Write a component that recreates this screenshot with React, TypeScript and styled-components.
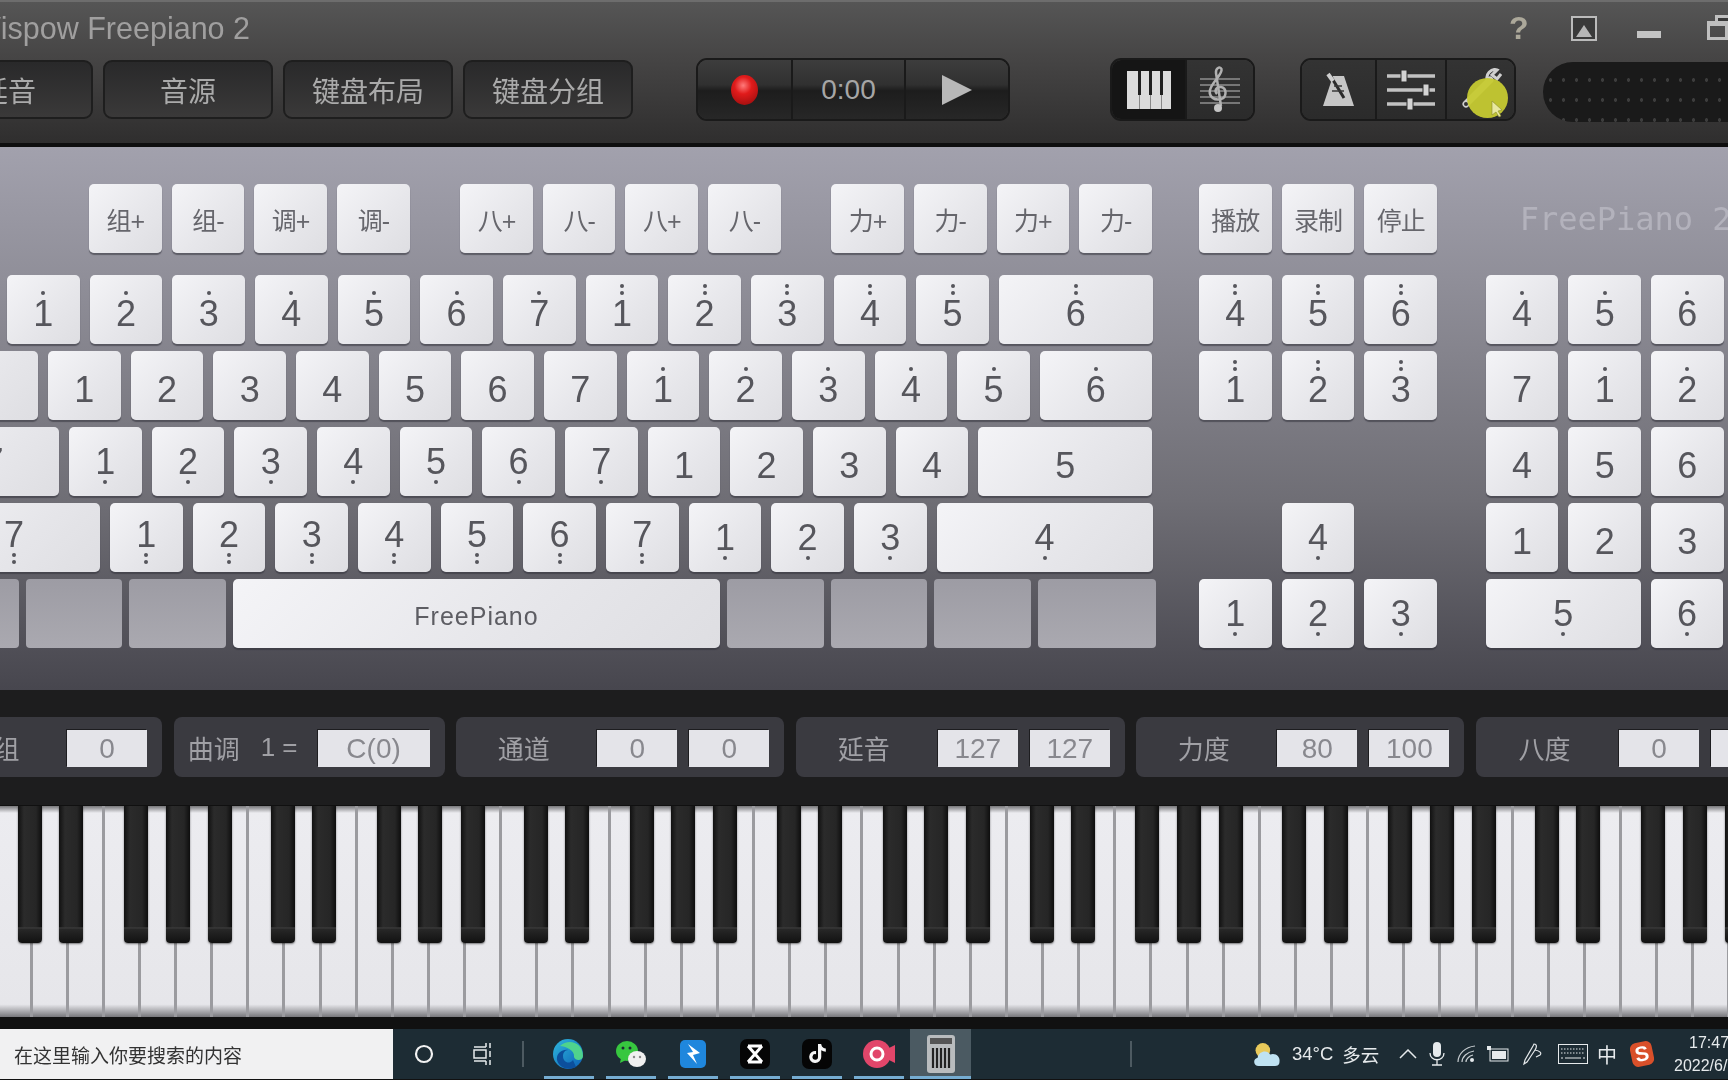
import { createGlobalStyle, styled } from "styled-components";
import { FaTiktok } from "react-icons/fa";

const GlobalStyle = createGlobalStyle`
  html, body {
    margin: 0;
    width: 1728px;
    height: 1080px;
    overflow: hidden;
    background: #111;
  }
  * {
    box-sizing: border-box;
  }
`;

const SANS = `"Liberation Sans", "Noto Sans CJK SC", sans-serif`;
const PITCH = 36.13;

// the app window runs off the left of the screen, as in the video
const AppWindow = styled.div`
  width: 1850px;
  margin-left: -112px;
  font-family: ${SANS};
  filter: blur(0.7px);
`;

const Header = styled.header`
  height: 147px;
  background: linear-gradient(#565656 0%, #464545 40%, #2f2e2e 100%);
  border-bottom: 4px solid #0e0e0e;
  box-shadow: inset 0 2px 0 #6d6d6d;
`;
const TitleRow = styled.div`
  height: 60px;
  display: flex;
  align-items: center;
  justify-content: space-between;
  padding: 0 0 4px 84px;
`;
const Title = styled.h1`
  margin: 0;
  font-size: 30.5px;
  font-weight: 400;
  color: #a09f9f;
  white-space: nowrap;
`;
const WindowIcons = styled.div`
  display: flex;
  align-items: center;
  gap: 40px;
  padding-right: 10px;
`;
const Help = styled.span`
  width: 18px;
  font-size: 32px;
  font-weight: 700;
  line-height: 1;
  color: #aca89a;
  margin-right: 4px;
`;
const FrameIcon = styled.div`
  width: 26px;
  height: 25px;
  border: 2px solid #bbb;
  background: #3a3a3a;
  display: flex;
  align-items: flex-end;
  justify-content: center;
  &::after {
    content: "";
    border: 8px solid transparent;
    border-top: 0;
    border-bottom: 12px solid #b6b6b6;
    margin-bottom: 2px;
  }
`;
const MinimizeIcon = styled.div`
  width: 24px;
  height: 7px;
  margin-top: 12px;
  background: #c4c4c4;
`;
const RestoreIcon = styled.div`
  width: 21px;
  height: 19px;
  margin: 4px 0 0 6px;
  border: 3px solid #bfbfbf;
  border-top-width: 5px;
  box-shadow: 8px -6px 0 -3px #3a3a3a, 8px -6px 0 0 #bfbfbf;
`;

const ToolRow = styled.div`
  display: flex;
  align-items: flex-start;
  padding-left: 35px;
`;
const MenuButtons = styled.div`
  display: flex;
  flex: none;
  gap: 10px;
  margin-right: 63px;
`;
const MenuButton = styled.div`
  width: 170px;
  height: 59px;
  flex: none;
  border-radius: 9px;
  border: 2px solid #1e1e1e;
  background: linear-gradient(#29292a, #3a3939);
  color: #aaa;
  font-size: 28px;
  display: flex;
  align-items: center;
  justify-content: center;
`;
const ButtonGroup = styled.div<{ $after: number }>`
  display: flex;
  flex: none;
  height: 63px;
  margin-top: -2px;
  margin-right: ${(p) => p.$after}px;
  border-radius: 11px;
  border: 2px solid #1a1a1a;
  overflow: hidden;
`;
const GroupCell = styled.div<{ $w: number; $dark?: boolean }>`
  width: ${(p) => p.$w}px;
  flex: none;
  display: flex;
  align-items: center;
  justify-content: center;
  background: ${(p) =>
    p.$dark
      ? "#151515"
      : "linear-gradient(#3d3d3d 0%, #303030 42%, #1d1d1d 52%, #272727 100%)"};
  & + & {
    border-left: 2px solid #1a1a1a;
  }
`;
const FlatCell = styled(GroupCell)`
  position: relative;
  background: ${(p) => (p.$dark ? "#151515" : "linear-gradient(#333, #2b2b2b)")};
`;
const RecordBall = styled.div`
  width: 27px;
  height: 30px;
  border-radius: 50%;
  background: radial-gradient(circle at 45% 35%, #ff7a7a 0%, #e11b1b 35%, #8d0b0b 100%);
`;
const Time = styled.span`
  color: #a6a6a6;
  font-size: 28px;
`;
const PlayArrow = styled.div`
  border-left: 30px solid #b8b8b8;
  border-top: 15px solid transparent;
  border-bottom: 15px solid transparent;
`;
const Highlight = styled.div`
  position: absolute;
  left: 20px;
  top: 18px;
  width: 41px;
  height: 40px;
  border-radius: 50%;
  background: rgba(198, 202, 50, 0.95);
`;
const CursorIcon = styled.svg`
  position: absolute;
  left: 44px;
  top: 40px;
`;
const Meter = styled.div`
  width: 220px;
  height: 60px;
  flex: none;
  margin-top: 2px;
  border-radius: 30px 0 0 30px;
  background:
    radial-gradient(circle, #3d3d3d 1.5px, transparent 2px) 14px 8px / 13px 20px,
    #1a1a1a;
`;

const Panel = styled.section`
  height: 543px;
  padding-top: 37px;
  display: flex;
  background: linear-gradient(#a2a1ad 0%, #8f8e98 25%, #6f6e75 65%, #47464e 100%);
`;
const Column = styled.div<{ $w?: number; $left?: number }>`
  width: ${(p) => (p.$w ? `${p.$w}px` : "auto")};
  margin-left: ${(p) => p.$left ?? 0}px;
  flex: none;
`;
const TopRow = styled.div<{ $left?: number }>`
  height: 69px;
  margin-bottom: 22px;
  padding-left: ${(p) => p.$left ?? 0}px;
  display: flex;
  align-items: center;
  gap: 50.5px;
`;
const KeyGroup = styled.div`
  display: flex;
  gap: 10px;
`;
const Rows = styled.div`
  display: flex;
  flex-direction: column;
  gap: 7px;
`;
const KeyRow = styled.div<{ $left?: number; $gap?: number }>`
  height: 69px;
  display: flex;
  gap: ${(p) => p.$gap ?? 10}px;
  padding-left: ${(p) => p.$left ?? 0}px;
`;
const Key = styled.div<{ $w?: number; $inset?: number }>`
  width: ${(p) => p.$w ?? 72.67}px;
  height: 69px;
  flex: none;
  padding-left: ${(p) => p.$inset ?? 0}px;
  border-radius: 5px;
  background: linear-gradient(135deg, #f4f4f7 0%, #e6e6ea 60%, #dedee2 100%);
  box-shadow: 0 2px 1px rgba(50, 50, 58, 0.55);
  color: #56565c;
  display: flex;
  align-items: center;
  justify-content: center;
`;
const BlankKey = styled.div<{ $w: number }>`
  width: ${(p) => p.$w}px;
  height: 69px;
  flex: none;
  border-radius: 4px;
  background: linear-gradient(#9d9ca4, #aaa9b0);
`;
const KeySpace = styled.div`
  width: 72.67px;
  flex: none;
`;
const FnLabel = styled.span`
  font-size: 25px;
  letter-spacing: -1px;
  color: #66666c;
  white-space: nowrap;
`;
const SpaceLabel = styled.span`
  font-size: 25px;
  letter-spacing: 1px;
  margin-top: 6px;
  color: #5d5d63;
`;
const Digit = styled.span<{ $shift: string }>`
  position: relative;
  font-size: 36px;
  line-height: 1;
  margin-top: ${(p) => (p.$shift.startsWith("a") ? 9 : p.$shift ? 1 : 8)}px;
  margin-bottom: ${(p) => (p.$shift === "b2" ? 6 : 0)}px;
`;
const Dots = styled.span<{ $below: boolean }>`
  position: absolute;
  left: 50%;
  transform: translateX(-50%);
  display: flex;
  flex-direction: column;
  gap: 3px;
  ${(p) => (p.$below ? "top: 100%;" : "bottom: calc(100% + 1px);")}
`;
const Dot = styled.i`
  width: 4px;
  height: 4px;
  border-radius: 50%;
  background: #56565c;
`;
const Watermark = styled.span`
  margin-left: 34px;
  font-family: "DejaVu Sans Mono", monospace;
  font-size: 32px;
  color: #b3b2bc;
  white-space: nowrap;
`;

const StatusStrip = styled.section`
  height: 116px;
  padding: 27px 0 0 38px;
  display: flex;
  gap: 11.6px;
  background: #1d1d1e;
  border-bottom: 1px solid #111;
`;
const Field = styled.div`
  height: 60px;
  flex: none;
  display: flex;
  align-items: center;
  gap: 12px;
  padding-right: 15px;
  border-radius: 8px;
  background: #3a3a40;
`;
const FieldLabel = styled.div<{ $w: number }>`
  width: ${(p) => p.$w}px;
  margin-right: -12px;
  padding-right: 6px;
  display: flex;
  justify-content: center;
  align-items: center;
  gap: 21px;
  font-size: 26px;
  color: #a0a0a5;
`;
const ValueBox = styled.div<{ $w?: number }>`
  width: ${(p) => p.$w ?? 80}px;
  height: 37px;
  margin-top: 3px;
  background: #e4e4e9;
  box-shadow: -1px -1px 0 #1d1d20;
  color: #88888e;
  font-size: 28px;
  display: flex;
  align-items: center;
  justify-content: center;
`;

const Piano = styled.section`
  height: 223px;
  display: flex;
  background: #111;
  padding-bottom: 12px;
`;
const WhiteKey = styled.div`
  position: relative;
  width: ${PITCH}px;
  flex: none;
  border-right: 3px solid #9b9b9f;
  background: linear-gradient(#77777a 0, #ececf0 7px, #e6e6ea 94%, #77777b 100%);
`;
const BlackKey = styled.div<{ $seam: number }>`
  position: absolute;
  z-index: 1;
  top: 0;
  left: calc(100% - 8.5px + ${(p) => p.$seam}px);
  width: 24px;
  height: 137px;
  border-radius: 0 0 4px 4px;
  background:
    linear-gradient(transparent 88%, #3a3a3a 89%, #272727 90%, #111 100%),
    linear-gradient(90deg, #111 0%, #2b2b2b 25%, #262626 75%, #0e0e0e 100%);
  box-shadow: 0 1px 2px rgba(0, 0, 0, 0.5);
`;

const Taskbar = styled.footer`
  height: 50px;
  display: flex;
  align-items: stretch;
  background: #1d2c34;
  color: #e6eaec;
  font-family: ${SANS};
  overflow: hidden;
  filter: blur(0.3px);
`;
const SearchBox = styled.div`
  width: 393px;
  flex: none;
  padding-left: 14px;
  background: #f1f1f2;
  color: #333;
  font-size: 19px;
  display: flex;
  align-items: center;
  white-space: nowrap;
`;
const BarSlot = styled.div<{ $w: number }>`
  width: ${(p) => p.$w}px;
  flex: none;
  display: flex;
  align-items: center;
  justify-content: center;
`;
const BarDivider = styled.div<{ $left: number; $right: number }>`
  width: 2px;
  height: 26px;
  flex: none;
  align-self: center;
  margin: 0 ${(p) => p.$right}px 0 ${(p) => p.$left}px;
  background: #4d5a61;
`;
const TaskApps = styled.div`
  display: flex;
  flex: none;
  gap: 12px;
`;
const TaskApp = styled.div<{ $active?: boolean; $w?: number }>`
  width: ${(p) => p.$w ?? 50}px;
  flex: none;
  margin-left: ${(p) => (p.$active ? -6 : 0)}px;
  display: flex;
  align-items: center;
  justify-content: center;
  border-bottom: 3px solid #76add2;
  padding-top: 2px;
  background: ${(p) => (p.$active ? "#4b5a62" : "transparent")};
`;
const Weather = styled.span`
  width: 106px;
  flex: none;
  padding-left: 5px;
  font-size: 18.5px;
  display: flex;
  gap: 9px;
  align-items: center;
  white-space: nowrap;
`;
const ImeLabel = styled.span`
  font-size: 20px;
`;
const SogouBadge = styled.span`
  width: 22px;
  height: 24px;
  border-radius: 6px;
  background: #d9502a;
  color: #fff;
  font-size: 21px;
  font-weight: 700;
  line-height: 24px;
  text-align: center;
  transform: rotate(-12deg);
`;
const Clock = styled.div`
  margin-left: 11px;
  width: 72px;
  flex: none;
  display: flex;
  flex-direction: column;
  justify-content: center;
  gap: 3px;
  font-size: 16px;
  line-height: 20px;
  white-space: nowrap;
`;
const ClockLine = styled.span<{ $indent?: number }>`
  padding-left: ${(p) => p.$indent ?? 0}px;
`;

type Mark = "" | "a1" | "a2" | "b1" | "b2";

function NoteKey({ n, mark = "", w, inset }: { n: string; mark?: Mark; w?: number; inset?: number }) {
  const count = mark.endsWith("2") ? 2 : mark ? 1 : 0;
  return (
    <Key $w={w} $inset={inset}>
      <Digit $shift={mark}>
        {n}
        {count > 0 && (
          <Dots $below={mark.startsWith("b")}>
            <Dot />
            {count === 2 && <Dot />}
          </Dots>
        )}
      </Digit>
    </Key>
  );
}

const notes = (digits: string, mark: Mark) =>
  digits.split("").map((n, i) => <NoteKey key={`${mark}${i}`} n={n} mark={mark} />);

const FnKeys = ({ labels }: { labels: string[] }) => (
  <KeyGroup>
    {labels.map((l, i) => (
      <Key key={i}>
        <FnLabel>{l}</FnLabel>
      </Key>
    ))}
  </KeyGroup>
);

// black key offset from the seam, repeating every seven white keys (null: no black key)
const BLACK_PATTERN = [-3, 2, null, -5.5, 0, 6, null];

function PianoKeys() {
  const keys = Array.from({ length: 53 }, (_, i) => {
    const seam = BLACK_PATTERN[(i - 3 + 70) % 7];
    return <WhiteKey key={i}>{seam !== null && <BlackKey $seam={seam} />}</WhiteKey>;
  });
  return <Piano>{keys}</Piano>;
}

const PianoIcon = () => (
  <svg width="46" height="40" viewBox="0 0 46 40">
    <rect x="1" y="1" width="44" height="38" fill="#dcdcdc" />
    <path d="M12 1h3v24h-3zM23 1h3v24h-3zM34 1h3v24h-3z" fill="#202020" />
    <path d="M13.500 25v14M24.500 25v14M35.500 25v14" stroke="#8a8a8a" />
  </svg>
);

const ClefIcon = () => (
  <svg width="44" height="48" viewBox="0 0 44 48" fill="none">
    <path d="M2 13h40M2 19h40M2 25h40M2 31h40M2 37h40" stroke="#8f8f8f" strokeWidth="1.500" />
    <path
      d="M23 40 L18 7 C17.500 2 22 0 23.500 3 C25 8 14 16 12 24 C10.500 31 17 35 23 33 C29 31 29 22 23 21 C18 20.500 16 25 19 28"
      stroke="#b0b0b0"
      strokeWidth="2.500"
    />
    <circle cx="20" cy="42" r="4" fill="#c4c4c4" />
  </svg>
);

const MetronomeIcon = () => (
  <svg width="34" height="36" viewBox="0 0 34 36">
    <path d="M11 4h11l10 30H1z" fill="#c6c6c6" />
    <path d="M8 3 L22 26" stroke="#2b2b2b" strokeWidth="3" />
    <path d="M6 2 L11 9" stroke="#cfcfcf" strokeWidth="4" />
    <path d="M12 14h8M10 19h12" stroke="#3a3a3a" strokeWidth="1.500" />
  </svg>
);

const SlidersIcon = () => (
  <svg width="50" height="42" viewBox="0 0 50 42">
    <path d="M1 7h48M1 21h48M1 35h48" stroke="#c2c2c2" strokeWidth="3.500" />
    <path d="M15 1h6v12h-6zM37 15h6v12h-6zM21 29h6v12h-6z" fill="#d4d4d4" stroke="#2c2c2c" />
  </svg>
);

const WrenchIcon = () => (
  <svg width="42" height="44" viewBox="0 0 42 44" fill="none">
    <path d="M6 36 L30 12" stroke="#cfcfcf" strokeWidth="7" strokeLinecap="round" />
    <path d="M28 14 C24 6 32 0 37 2 L32 7 L37 11 L41 6" stroke="#cfcfcf" strokeWidth="3" />
    <circle cx="6" cy="36" r="2" fill="#333" />
  </svg>
);

const EdgeIcon = () => (
  <svg width="32" height="32" viewBox="0 0 32 32">
    <defs>
      <linearGradient id="edgeA" x1="0" y1="0" x2="1" y2="1">
        <stop offset="0" stopColor="#2fb7dc" />
        <stop offset="1" stopColor="#0b5fb5" />
      </linearGradient>
    </defs>
    <circle cx="15" cy="16" r="15" fill="url(#edgeA)" />
    <path d="M7 8 C15 0 30 4 30 18 C30 23 22 23 21 19 C22 12 12 8 7 8z" fill="#4fd38d" />
    <path d="M20 22 C16 27 10 24 10 18 C10 15 12 12 15 12 C9 11 3 16 4 22 C6 30 16 33 23 29z" fill="#0c4f9c" />
  </svg>
);

const WeChatIcon = () => (
  <svg width="32" height="32" viewBox="0 0 32 32">
    <ellipse cx="12" cy="13" rx="11" ry="10" fill="#37c73f" />
    <path d="M6 20l-1 5 6-3z" fill="#37c73f" />
    <circle cx="8" cy="10" r="1.500" fill="#1d2c34" />
    <circle cx="15" cy="10" r="1.500" fill="#1d2c34" />
    <ellipse cx="22" cy="21" rx="9" ry="8" fill="#f0f0f0" />
    <circle cx="19" cy="19" r="1.200" fill="#888" />
    <circle cx="25" cy="19" r="1.200" fill="#888" />
  </svg>
);

const ArrowAppIcon = () => (
  <svg width="26" height="28" viewBox="0 0 26 28">
    <rect width="26" height="28" rx="5" fill="#1f87dd" />
    <path d="M8 4 L20 13 L13 15 L17 24 L7 13 L13 12z" fill="#fff" />
  </svg>
);

const CapcutIcon = () => (
  <svg width="30" height="30" viewBox="0 0 30 30">
    <rect width="30" height="30" rx="7" fill="#050505" />
    <path d="M8 7h14M8 23h14M8 7l14 16M22 7L8 23" stroke="#fff" strokeWidth="3" fill="none" />
  </svg>
);

const TiktokIcon = () => (
  <svg width="30" height="30" viewBox="0 0 30 30">
    <rect width="30" height="30" rx="7" fill="#050505" />
    <g transform="translate(6 5)">
      <FaTiktok size={19} color="#f5f5f5" />
    </g>
  </svg>
);

const RecorderIcon = () => (
  <svg width="32" height="30" viewBox="0 0 32 30">
    <circle cx="14" cy="15" r="14" fill="#e2466a" />
    <circle cx="14" cy="15" r="6" fill="none" stroke="#fff" strokeWidth="3" />
    <path d="M26 9l6-3v18l-6-3z" fill="#e2466a" />
  </svg>
);

const FreepianoIcon = () => (
  <svg width="28" height="38" viewBox="0 0 28 38">
    <rect width="28" height="38" rx="3" fill="#b9bcbe" />
    <rect x="3" y="3" width="22" height="6" fill="#555" />
    <path d="M6 13v20M10 13v20M14 13v20M18 13v20M22 13v20" stroke="#222" strokeWidth="2.200" />
  </svg>
);

const CloudIcon = () => (
  <svg width="30" height="25" viewBox="0 0 28 24">
    <circle cx="10" cy="8" r="7" fill="#e8c95a" />
    <path d="M6 23 C1 23 0 16 5 15 C6 9 14 7 17 12 C22 10 27 14 26 19 C26 22 24 23 22 23z" fill="#bfe2f2" />
  </svg>
);

const CaretIcon = () => (
  <svg width="18" height="10" viewBox="0 0 18 10" fill="none">
    <path d="M1 9l8-8 8 8" stroke="#e6eaec" strokeWidth="1.500" />
  </svg>
);

const MicIcon = () => (
  <svg width="16" height="24" viewBox="0 0 16 24" fill="none">
    <rect x="4" y="0" width="8" height="15" rx="4" fill="#e6eaec" />
    <path d="M1 11c0 9 14 9 14 0M8 18v5M3 23h10" stroke="#e6eaec" strokeWidth="1.300" />
  </svg>
);

const SignalIcon = () => (
  <svg width="20" height="18" viewBox="0 0 20 18" fill="none" stroke="#c8ced1" strokeWidth="1.200">
    <path d="M1 17C1 9 8 2 18 1M5 17c0-5 5-10 12-11M9 17c0-3 3-6 7-7" />
    <circle cx="15" cy="15" r="2" fill="#e6eaec" stroke="none" />
  </svg>
);

const BatteryIcon = () => (
  <svg width="22" height="16" viewBox="0 0 22 16">
    <rect x="3" y="3" width="18" height="12" fill="none" stroke="#e6eaec" />
    <rect x="5" y="5" width="14" height="8" fill="#e6eaec" />
    <path d="M0 0h4v4H0z" fill="#e6eaec" />
  </svg>
);

const PenIcon = () => (
  <svg width="22" height="24" viewBox="0 0 22 24" fill="none" stroke="#e6eaec" strokeWidth="1.200">
    <path d="M12 2c3 0 3 3 1 6l-8 12-3 2 1-4 8-14zM13 8c5 1 7 3 5 5l-4 2" />
  </svg>
);

const KeyboardIcon = () => (
  <svg width="30" height="20" viewBox="0 0 30 20" fill="none" stroke="#e6eaec">
    <rect x="0.500" y="0.500" width="29" height="19" />
    <path d="M3 5h24M3 9h24" strokeDasharray="1.500 1.500" />
    <path d="M7 14h16M3 14h2M25 14h2" />
  </svg>
);

export default function App() {
  return (
    <>
      <GlobalStyle />
      <AppWindow>
        <Header>
          <TitleRow>
            <Title>Wispow Freepiano 2</Title>
            <WindowIcons>
              <Help>?</Help>
              <FrameIcon />
              <MinimizeIcon />
              <RestoreIcon />
            </WindowIcons>
          </TitleRow>
          <ToolRow>
            <MenuButtons>
              <MenuButton>延音</MenuButton>
              <MenuButton>音源</MenuButton>
              <MenuButton>键盘布局</MenuButton>
              <MenuButton>键盘分组</MenuButton>
            </MenuButtons>
            <ButtonGroup $after={100}>
              <GroupCell $w={93}>
                <RecordBall />
              </GroupCell>
              <GroupCell $w={113}>
                <Time>0:00</Time>
              </GroupCell>
              <GroupCell $w={104}>
                <PlayArrow />
              </GroupCell>
            </ButtonGroup>
            <ButtonGroup $after={45}>
              <FlatCell $w={73} $dark>
                <PianoIcon />
              </FlatCell>
              <FlatCell $w={68}>
                <ClefIcon />
              </FlatCell>
            </ButtonGroup>
            <ButtonGroup $after={27}>
              <FlatCell $w={73}>
                <MetronomeIcon />
              </FlatCell>
              <FlatCell $w={70}>
                <SlidersIcon />
              </FlatCell>
              <FlatCell $w={69}>
                <WrenchIcon />
                <Highlight />
                <CursorIcon width="12" height="18" viewBox="0 0 12 18">
                  <path d="M1 1v14l4-3 3 5 2-1-3-5 4-1z" fill="#e8e8a0" stroke="#8a8a30" strokeWidth="0.600" />
                </CursorIcon>
              </FlatCell>
            </ButtonGroup>
            <Meter />
          </ToolRow>
        </Header>

        <Panel>
          <Column $w={1265}>
            <TopRow $left={201}>
              <FnKeys labels={["组+", "组-", "调+", "调-"]} />
              <FnKeys labels={["八+", "八-", "八+", "八-"]} />
              <FnKeys labels={["力+", "力-", "力+", "力-"]} />
            </TopRow>
            <Rows>
              <KeyRow $left={119}>
                {notes("1234567", "a1")}
                {notes("12345", "a2")}
                <NoteKey n="6" mark="a2" w={154} />
              </KeyRow>
              <KeyRow>
                <Key $w={150} />
                {notes("1234567", "")}
                {notes("12345", "a1")}
                <NoteKey n="6" mark="a1" w={112} />
              </KeyRow>
              <KeyRow>
                <NoteKey n="7" mark="b1" w={171} inset={40} />
                {notes("1234567", "b1")}
                {notes("1234", "")}
                <NoteKey n="5" w={174} />
              </KeyRow>
              <KeyRow>
                <NoteKey n="7" mark="b2" w={212} inset={40} />
                {notes("1234567", "b2")}
                {notes("123", "b1")}
                <NoteKey n="4" mark="b1" w={216} />
              </KeyRow>
              <KeyRow $gap={7}>
                <BlankKey $w={131} />
                <BlankKey $w={96} />
                <BlankKey $w={97} />
                <Key $w={487}>
                  <SpaceLabel>FreePiano</SpaceLabel>
                </Key>
                <BlankKey $w={97} />
                <BlankKey $w={96} />
                <BlankKey $w={97} />
                <BlankKey $w={118} />
              </KeyRow>
            </Rows>
          </Column>

          <Column $left={46}>
            <TopRow>
              <FnKeys labels={["播放", "录制", "停止"]} />
            </TopRow>
            <Rows>
              <KeyRow>{notes("456", "a2")}</KeyRow>
              <KeyRow>{notes("123", "a2")}</KeyRow>
              <KeyRow />
              <KeyRow>
                <KeySpace />
                <NoteKey n="4" mark="b1" />
              </KeyRow>
              <KeyRow>{notes("123", "b1")}</KeyRow>
            </Rows>
          </Column>

          <Column $left={48.7}>
            <TopRow>
              <Watermark>FreePiano 2</Watermark>
            </TopRow>
            <Rows>
              <KeyRow>{notes("456", "a1")}</KeyRow>
              <KeyRow>
                <NoteKey n="7" />
                <NoteKey n="1" mark="a1" />
                <NoteKey n="2" mark="a1" />
              </KeyRow>
              <KeyRow>{notes("456", "")}</KeyRow>
              <KeyRow>{notes("123", "")}</KeyRow>
              <KeyRow>
                <NoteKey n="5" mark="b1" w={155} />
                <NoteKey n="6" mark="b1" />
              </KeyRow>
            </Rows>
          </Column>
        </Panel>

        <StatusStrip>
          <Field>
            <FieldLabel $w={141}>分组</FieldLabel>
            <ValueBox>0</ValueBox>
          </Field>
          <Field>
            <FieldLabel $w={144}>
              <span>曲调</span>
              <span>1 =</span>
            </FieldLabel>
            <ValueBox $w={112}>C(0)</ValueBox>
          </Field>
          <Field>
            <FieldLabel $w={141}>通道</FieldLabel>
            <ValueBox>0</ValueBox>
            <ValueBox>0</ValueBox>
          </Field>
          <Field>
            <FieldLabel $w={142}>延音</FieldLabel>
            <ValueBox>127</ValueBox>
            <ValueBox>127</ValueBox>
          </Field>
          <Field>
            <FieldLabel $w={141}>力度</FieldLabel>
            <ValueBox>80</ValueBox>
            <ValueBox>100</ValueBox>
          </Field>
          <Field>
            <FieldLabel $w={143}>八度</FieldLabel>
            <ValueBox>0</ValueBox>
            <ValueBox>0</ValueBox>
          </Field>
        </StatusStrip>

        <PianoKeys />
      </AppWindow>

      <Taskbar>
        <SearchBox>在这里输入你要搜索的内容</SearchBox>
        <BarSlot $w={62}>
          <svg width="20" height="20" viewBox="0 0 20 20" fill="none">
            <circle cx="10" cy="10" r="8" stroke="#f2f2f2" strokeWidth="2.200" />
          </svg>
        </BarSlot>
        <BarSlot $w={56}>
          <svg width="20" height="22" viewBox="0 0 20 22" fill="none" stroke="#e6eaec" strokeWidth="1.500">
            <path d="M1 4h12M13 0v4M1 18h12M13 18v4" />
            <rect x="1" y="7" width="12" height="8" />
            <path d="M17 0v5M17 8v6M17 17v5" />
          </svg>
        </BarSlot>
        <BarDivider $left={11} $right={20} />
        <TaskApps>
          <TaskApp>
            <EdgeIcon />
          </TaskApp>
          <TaskApp>
            <WeChatIcon />
          </TaskApp>
          <TaskApp>
            <ArrowAppIcon />
          </TaskApp>
          <TaskApp>
            <CapcutIcon />
          </TaskApp>
          <TaskApp>
            <TiktokIcon />
          </TaskApp>
          <TaskApp>
            <RecorderIcon />
          </TaskApp>
          <TaskApp $active $w={61}>
            <FreepianoIcon />
          </TaskApp>
        </TaskApps>
        <BarDivider $left={159} $right={115} />
        <BarSlot $w={40}>
          <CloudIcon />
        </BarSlot>
        <Weather>
          <span>34°C</span>
          <span>多云</span>
        </Weather>
        <BarSlot $w={30}>
          <CaretIcon />
        </BarSlot>
        <BarSlot $w={28}>
          <MicIcon />
        </BarSlot>
        <BarSlot $w={32}>
          <SignalIcon />
        </BarSlot>
        <BarSlot $w={30}>
          <BatteryIcon />
        </BarSlot>
        <BarSlot $w={40}>
          <PenIcon />
        </BarSlot>
        <BarSlot $w={40}>
          <KeyboardIcon />
        </BarSlot>
        <BarSlot $w={28}>
          <ImeLabel>中</ImeLabel>
        </BarSlot>
        <BarSlot $w={42}>
          <SogouBadge>S</SogouBadge>
        </BarSlot>
        <Clock>
          <ClockLine $indent={15}>17:47</ClockLine>
          <ClockLine>2022/6/</ClockLine>
        </Clock>
      </Taskbar>
    </>
  );
}
